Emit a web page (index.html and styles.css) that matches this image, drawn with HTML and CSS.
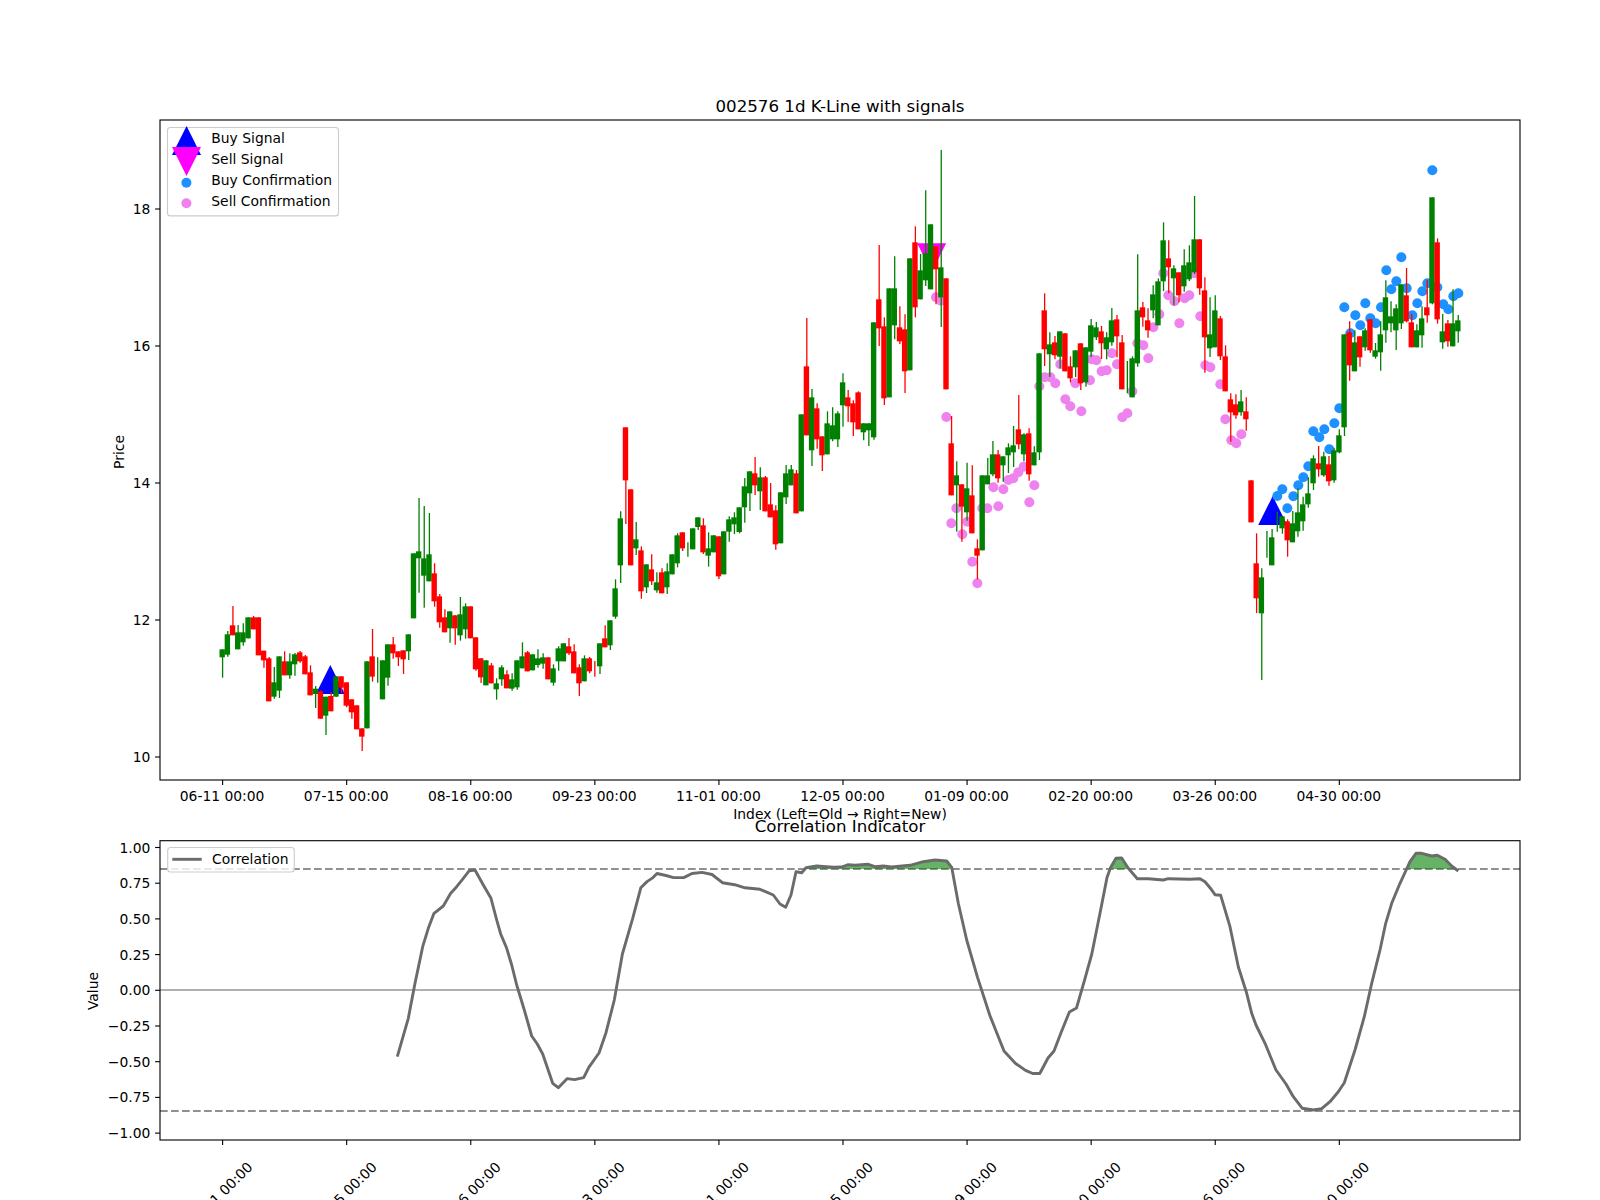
FILE: index.html
```html
<!DOCTYPE html>
<html lang="en">

<head>
    <meta charset="UTF-8">
    <meta name="viewport" content="width=device-width, initial-scale=1.0">
    <title>002576 1d K-Line with signals</title>
    <link rel="stylesheet" href="styles.css">
</head>

<body>
    <svg id="figure" class="figure" width="1600" height="1200" viewBox="0 0 1600 1200" xmlns="http://www.w3.org/2000/svg">
        <text class="title" x="840" y="112">002576 1d K-Line with signals</text>
        <text class="label" x="840" y="819">Index (Left=Old → Right=New)</text>
        <text class="title" x="840" y="831.5">Correlation Indicator</text>
        <text class="label" transform="translate(124,452) rotate(-90)">Price</text>
        <text class="label" transform="translate(98,991) rotate(-90)">Value</text>

        <!-- candles and markers get added here by chart.js -->
        <g id="signals"></g>
        <g id="dots"></g>
        <g id="candles"></g>
        <rect class="frame" x="160" y="120" width="1360" height="660"></rect>
        <g id="price-ticks"></g>

        <line class="limit" x1="160" x2="1520" y1="869" y2="869"></line>
        <line class="limit" x1="160" x2="1520" y1="1111" y2="1111"></line>
        <line class="zero" x1="160" x2="1520" y1="990" y2="990"></line>
        <g id="corr"></g>
        <rect class="frame" x="160" y="840.7" width="1360" height="299.3"></rect>
        <g id="corr-ticks"></g>

        <g class="legend">
            <rect class="legend-box" x="167.5" y="127.5" width="171" height="88.4"></rect>
            <polygon class="buy" points="186.6,126 172,155 201,155"></polygon>
            <polygon class="sell" points="172,147 201,147 186.6,176"></polygon>
            <circle class="dot-buy" cx="186.4" cy="182.7" r="5"></circle>
            <circle class="dot-sell" cx="186.4" cy="203.3" r="5"></circle>
            <text class="tick-x" x="211.3" y="143.3">Buy Signal</text>
            <text class="tick-x" x="211.3" y="164.3">Sell Signal</text>
            <text class="tick-x" x="211.3" y="185.3">Buy Confirmation</text>
            <text class="tick-x" x="211.3" y="206.3">Sell Confirmation</text>
        </g>

        <g class="legend">
            <rect class="legend-box" x="167.7" y="847.5" width="126.6" height="24.5"></rect>
            <line class="corr-line" x1="172.3" x2="201.7" y1="859.3" y2="859.3"></line>
            <text class="tick-x" x="212" y="864">Correlation</text>
        </g>
    </svg>

    <script src="chart.js"></script>
</body>

</html>
```

FILE: styles.css
```css
body {
    margin: 0;
    background-color: #fff;
    overflow: hidden;
}

.figure {
    display: block;
    font-family: "DejaVu Sans", sans-serif;
    font-size: 13.89px;
    fill: #000;
}

.title {
    font-size: 16.67px;
    text-anchor: middle;
}

.label {
    text-anchor: middle;
}

.tick-y {
    text-anchor: end;
}

.tick-r {
    text-anchor: middle;
}

.frame {
    fill: none;
    stroke: #000;
    stroke-width: 1.11;
}

.tick {
    stroke: #000;
    stroke-width: 1.11;
}

.wick-r,
.body-r {
    fill: #f00;
    stroke: #f00;
}

.wick-g,
.body-g {
    fill: #008000;
    stroke: #008000;
}

.wick-r,
.wick-g {
    stroke-width: 1.3;
}

.body-r,
.body-g {
    stroke: none;
}

.buy {
    fill: #00f;
}

.sell {
    fill: #f0f;
}

.dot-buy {
    fill: #1e90ff;
}

.dot-sell {
    fill: #ee82ee;
}

.limit {
    stroke: #909090;
    stroke-width: 2;
    stroke-dasharray: 7.7 3.3;
}

.zero {
    stroke: #b0b0b0;
    stroke-width: 2;
}

.corr-line {
    fill: none;
    stroke: #6b6b6b;
    stroke-width: 2.9;
    stroke-linejoin: round;
}

.corr-fill {
    fill: #008000;
    fill-opacity: 0.6;
}

.legend-box {
    fill: #fff;
    fill-opacity: 0.8;
    stroke: #ccc;
    stroke-width: 1.11;
    rx: 3px;
}
```

FILE: chart.js
```js
const NS = "http://www.w3.org/2000/svg";

function add(parent, tag, attrs, text) {
    const el = document.createElementNS(NS, tag);
    for (const key in attrs) el.setAttribute(key, attrs[key]);
    if (text) el.textContent = text;
    document.getElementById(parent).appendChild(el);
    return el;
}

// bar index -> x pixel
const barX = i => 222.6 + 5.17 * i;
const W = null;

// [color, wick top, body top, body bottom, wick bottom], y = y0 + v / 3
const candleGroups = [
    { y0: 480, rows: [
        ["g",508,508,532,593],["g",453,463,524,530],["r",378,436,466,466],["g",435,457,508,508],["g",430,457,487,497],
        ["g",412,412,475,475],["r",408,412,448,448],["r",412,412,526,526],["r",512,512,541,563],["r",531,535,664,664],
        ["g",561,607,650,656],["g",529,529,632,654],["r",514,544,586,586],["g",520,544,586,596],["g",519,523,553,587],
        ["r",513,517,544,548],["r",525,529,583,583],["r",556,577,646,646],["g",618,626,642,684],["r",630,634,716,716],
        ["g",650,650,707,765],["r",636,648,694,694],["g",589,589,650,650],["r",589,589,623,640],["r",607,607,677,682],
        ["r",658,658,697,716],["r",676,676,748,748],["r",745,745,770,813],["g",544,544,745,745],["r",447,529,590,605],
        ["g",532,W,W,608],["g",541,541,658,658],["g",493,493,593,617],["r",471,493,520,536],["r",514,514,532,558]
    ] },
    { y0: 400, rows: [
        ["r",751,751,778,822],["g",703,703,754,780],["g",460,460,655,655],["g",294,454,475,578],["g",318,475,527,623],
        ["g",339,463,544,544],["r",490,520,604,620],["r",582,589,667,683],["r",628,652,697,697],["g",634,634,685,728],
        ["r",646,646,685,734],["g",591,643,706,722],["g",610,619,688,716],["r",619,619,715,715],["r",712,712,808,812],
        ["r",775,775,832,849],["g",781,781,856,856],["r",789,796,850,850],["g",835,850,868,899],["g",796,802,838,857],
        ["r",811,823,865,865],["g",820,838,866,872],["g",781,781,862,869],["g",727,769,805,805],["r",753,757,814,814],
        ["g",763,763,811,811],["g",748,775,795,803],["g",760,772,791,806],["r",772,772,838,838],["g",793,805,848,857],
        ["g",739,745,784,812],["g",730,730,784,784],["r",714,739,760,765],["r",733,754,820,820],["r",793,802,850,888],
        ["g",766,775,844,844],["r",771,775,814,820],["r",783,W,W,830],["g",730,730,799,822],["r",676,715,742,742],
        ["g",661,661,736,750],["g",538,565,650,656],["g",334,355,496,549],["r",82,82,241,372],["r",268,268,496,496],
        ["g",366,418,445,465]
    ] },
    { y0: 300, rows: [
        ["r",739,751,874,896],["g",793,793,862,879],["r",763,808,844,855],["g",817,847,871,878],["r",805,817,880,880],
        ["g",790,814,862,882],["g",763,763,823,823],["g",700,706,790,802],["r",697,697,745,753],["g",727,W,W,770],
        ["g",685,685,748,748],["g",652,652,681,690],["r",655,676,757,762],["g",697,745,767,800],["g",706,706,757,757],
        ["r",709,709,829,837],["g",694,694,823,823],["g",649,658,695,725],["g",637,652,673,702],["g",622,622,696,700],
        ["g",534,559,622,668],["g",514,514,580,633],["r",471,520,556,585],["g",502,532,574,630],["r",528,532,634,634],
        ["r",549,613,652,652],["r",616,631,733,749],["g",577,577,730,730],["g",495,520,592,612],["g",495,508,556,556],
        ["r",510,520,640,640],["g",343,343,634,634],["r",54,199,406,406],["g",267,292,451,498],["r",310,325,418,446],
        ["r",409,409,466,513],["g",334,370,463,463],["g",322,376,418,424],["g",334,340,418,441]
    ] },
    { y0: 140, rows: [
        ["g",700,727,796,860],["r",750,772,799,846],["r",781,790,847,888],["r",754,757,868,868],["g",850,850,877,901],
        ["g",850,850,871,918],["g",547,547,892,899],["r",315,478,565,618],["r",532,559,775,795],["g",445,445,772,772],
        ["g",349,445,556,598],["r",499,562,604,612],["r",523,568,694,759],["g",355,355,691,691],["r",259,307,502,532],
        ["g",342,391,478,478],["g",151,340,421,438],["g",253,253,448,448],["r",319,319,388,493],["g",30,382,472,561],
        ["r",415,415,748,748]
    ] },
    { y0: 280, rows: [
        ["r",408,490,646,646],["g",544,586,616,755],["r",613,613,680,785],["g",548,625,697,722],["r",556,646,760,760],
        ["r",778,805,827,898],["g",586,586,811,811],["g",534,586,613,613],["g",483,523,583,589],["r",510,523,595,608],
        ["g",529,529,556,605],["g",490,502,526,579],["g",438,496,517,561],["r",345,448,493,508],["g",460,463,523,544],
        ["r",445,460,583,602],["g",499,517,556,556],["g",220,220,517,540],["r",40,91,208,258],["g",157,193,223,291],
        ["r",168,187,226,238],["g",154,154,230,265],["r",160,160,274,274],["r",229,259,295,307],["g",211,211,262,291],
        ["r",190,190,310,330],["g",202,202,307,320]
    ] },
    { y0: 180, rows: [
        ["g",417,436,515,531],["g",426,442,472,480],["r",438,454,490,537],["g",457,472,508,538],["g",384,421,487,497],
        ["r",405,418,469,532],["r",465,487,628,628],["g",543,W,W,640],["g",529,535,652,652],["g",223,391,550,560],
        ["r",366,382,412,440],["r",385,421,451,473],["g",316,343,391,415],["g",295,304,436,436],["g",127,181,304,333],
        ["r",181,235,262,340],["g",256,265,295,376],["r",277,277,346,367],["g",208,256,319,335],["g",196,247,298,303],
        ["g",48,178,277,282],["r",178,178,325,344],["r",292,331,472,578],["g",352,463,505,531],["g",346,391,502,502],
        ["r",408,415,529,540],["r",496,529,634,634],["r",640,658,697,785],["r",643,673,706,716],["g",630,664,697,707],
        ["r",652,694,718,752]
    ] },
    { y0: 380, rows: [
        ["r",301,301,427,427],["r",460,550,655,699],["g",565,592,700,900],["g",453,W,W,533],["g",447,472,556,556],
        ["g",395,W,W,455],["g",409,409,445,461],["r",418,424,481,530],["g",393,430,487,487],["g",325,397,454,470],
        ["g",350,373,424,452],["g",292,340,373,383],["g",226,235,310,330],["r",198,250,268,290],["g",215,229,286,290],
        ["r",228,253,304,317],["g",205,211,301,308],["g",148,166,217,220]
    ] },
    { y0: 150, rows: [
        ["g",553,553,832,858],["r",514,547,646,692],["g",541,577,664,664],["r",559,559,622,650],["g",535,541,592,602],
        ["r",508,508,601,608],["g",579,601,620,626],["g",514,553,607,662],["g",391,442,541,578],["g",454,499,520,547],
        ["g",463,475,541,600],["g",403,403,520,537],["r",354,436,514,517],["r",492,517,592,592],["g",523,541,592,592],
        ["g",469,505,556,593],["r",390,472,496,518],["g",142,142,460,463],["r",265,277,508,521],["g",492,544,577,596],
        ["r",510,520,574,590],["g",418,520,589,589],["g",495,511,544,578]
    ] }
];

let bar = 0;
candleGroups.forEach(group => {
    group.rows.forEach(row => {
        const x = barX(bar);
        const y = v => group.y0 + v / 3;
        add("candles", "line", { class: "wick-" + row[0], x1: x, x2: x, y1: y(row[1]), y2: y(row[4]) });
        if (row[2] !== W) {
            add("candles", "rect", { class: "body-" + row[0], x: x - 3.1, y: y(row[2]), width: 5.4, height: y(row[3]) - y(row[2]) });
        }
        bar++;
    });
});

// signal triangles
[[330.3, 665], [1272.7, 496]].forEach(([x, y]) => {
    add("signals", "polygon", { class: "buy", points: `${x},${y} ${x - 14.5},${y + 29} ${x + 14.5},${y + 29}` });
});
add("signals", "polygon", { class: "sell", points: "917.2,243.3 946.2,243.3 931.7,272.3" });

// confirmation dots, in zoomed coordinates: [x0, y0, points]
const dotGroups = [
    ["dot-sell", 930, 280, [[18,52],[33,62],[49,411],[79,685],[64,730],[112,725],[97,763],[127,845],[142,910],[157,685],[172,685],[190,622],[205,679],[220,628],[235,600],[250,595],[265,577],[281,560],[298,667],[313,616],[328,319],[344,292],[361,292],[376,310],[391,253],[406,358],[421,379],[436,310],[454,394]]],
    ["dot-sell", 1090, 180, [[0,601],[5,538],[19,541],[35,574],[50,571],[66,520],[81,553],[97,712],[112,700],[127,634],[142,490],[160,496],[175,535],[190,442],[208,403],[220,280],[235,346],[253,364],[268,430],[284,355],[298,346],[313,280],[331,409],[346,556],[361,562],[391,613],[406,718],[424,781],[439,790],[454,763]]],
    ["dot-buy", 1240, 380, [[142,385],[112,348],[127,328],[160,349],[175,316],[190,292],[205,259]]],
    ["dot-buy", 1310, 150, [[10,844],[28,862],[43,838],[58,898],[73,820],[88,775],[103,472],[121,550],[136,496],[151,526],[166,460],[181,505],[197,520],[213,472],[229,361],[244,418],[259,394],[274,322],[290,415],[307,496],[322,460],[337,424],[352,400],[367,61],[382,412],[400,463],[415,478],[430,439],[445,430]]]
];
dotGroups.forEach(([cls, x0, y0, points]) => {
    points.forEach(p => add("dots", "circle", { class: cls, cx: x0 + p[0] / 3, cy: y0 + p[1] / 3, r: 5 }));
});

// x ticks, both charts
const dates = ["06-11", "07-15", "08-16", "09-23", "11-01", "12-05", "01-09", "02-20", "03-26", "04-30"];
dates.forEach((date, k) => {
    const x = barX(24 * k);
    add("price-ticks", "line", { class: "tick", x1: x, x2: x, y1: 780, y2: 784.9 });
    add("price-ticks", "text", { class: "tick-r", x: x - 0.5, y: 800.6 }, date + " 00:00");
    add("corr-ticks", "line", { class: "tick", x1: x, x2: x, y1: 1140, y2: 1144.9 });
    add("corr-ticks", "text", { class: "tick-r", transform: `translate(${x + 1},1198) rotate(-45)` }, date + " 00:00");
});

// y ticks
[[18, 209], [16, 346], [14, 483], [12, 620], [10, 757]].forEach(([v, y]) => {
    add("price-ticks", "line", { class: "tick", x1: 155.1, x2: 160, y1: y, y2: y });
    add("price-ticks", "text", { class: "tick-y", x: 150.3, y: y + 5 }, String(v));
});
["1.00", "0.75", "0.50", "0.25", "0.00", "\u22120.25", "\u22120.50", "\u22120.75", "\u22121.00"].forEach((v, k) => {
    const y = 847.5 + 35.7 * k;
    add("corr-ticks", "line", { class: "tick", x1: 155.1, x2: 160, y1: y, y2: y });
    add("corr-ticks", "text", { class: "tick-y", x: 150.3, y: y + 5 }, v);
});

// correlation curve
const corr = [
    [397.3,1056.7],[408.3,1018.3],[415,983.3],[422.7,946.7],[428.3,928.3],[434,913.3],[443.3,906],[450.7,893.3],
    [456.7,886.7],[463.3,878.3],[469.3,870.7],[475,870],[483.3,885],[491,898.3],[496.7,920],[500.7,934],[506.7,948.3],
    [511.7,965],[516.7,985],[524.3,1010],[531.7,1036],[537.3,1044],[542.7,1054],[552.7,1083.3],[558.3,1087.7],
    [567.3,1078.6],[574.5,1079.6],[583.7,1077.6],[588.8,1067.3],[599,1053],[606,1032.7],[614.3,1000],[622.4,954],
    [632.7,918.4],[640.8,887.8],[647,881.6],[653,877.6],[657,873.5],[666,875.5],[673.5,877.6],[683.7,877.6],[692,873.5],
    [702,872.4],[712,874.5],[722.4,882.7],[734.7,884.7],[745,887.8],[760,889.3],[773.3,895],[780,904],[785.7,907.3],
    [791,895],[796,871.7],[801.7,872.7],[806,867.7],[816.7,866],[833.3,867.3],[841.7,867],[848.3,864.7],[855,865.3],
    [868.3,864.3],[875,866.7],[883.3,866],[891.7,867],[910,865.3],[923.3,861.7],[935,860],[946.7,861],[951.7,867.3],
    [958.3,903.3],[966.7,940],[977.6,977.6],[989.8,1015.3],[1004,1051],[1015.3,1063.3],[1025.5,1070.4],[1032.7,1073.5],
    [1039.8,1073.5],[1048,1058],[1054,1051],[1061,1032.7],[1069.4,1012],[1076.5,1008],[1084.7,979.6],[1091.8,954],
    [1100,913.3],[1107,877.6],[1110.7,867.3],[1116,858.3],[1121.7,858],[1128.3,868.3],[1137.3,878.7],[1148.3,878.7],
    [1163.3,880],[1168.3,878.7],[1190,879.3],[1200,878.7],[1205,881.7],[1210,887.7],[1215,894.7],[1220.7,895.3],
    [1230,926.7],[1238.3,966.7],[1246.7,993.3],[1251.7,1013.3],[1256,1025],[1265,1043.3],[1276,1070],[1286,1084],
    [1293.3,1096.7],[1302.3,1108.3],[1313.3,1110],[1321.7,1108.7],[1330,1101.7],[1338.3,1091.7],[1344.3,1082.7],
    [1355,1050],[1364.3,1016.7],[1371.7,983.3],[1380,950],[1385.7,923.3],[1391.7,903.3],[1400,883.3],[1410,861.7],
    [1416,853.3],[1421.7,853.3],[1431.7,856],[1437.3,855.3],[1445,859.3],[1451.7,866],[1458.3,871]
];

// green fill above the 0.85 line
const LIMIT = 869;
let above = [];
corr.forEach((p, i) => {
    if (p[1] < LIMIT) {
        if (!above.length) {
            const q = corr[i - 1];
            above.push([q[0] + (p[0] - q[0]) * (LIMIT - q[1]) / (p[1] - q[1]), LIMIT]);
        }
        above.push(p);
    } else if (above.length) {
        const q = corr[i - 1];
        above.push([q[0] + (p[0] - q[0]) * (LIMIT - q[1]) / (p[1] - q[1]), LIMIT]);
        add("corr", "polygon", { class: "corr-fill", points: above.join(" ") });
        above = [];
    }
});
add("corr", "polyline", { class: "corr-line", points: corr.join(" ") });
```
